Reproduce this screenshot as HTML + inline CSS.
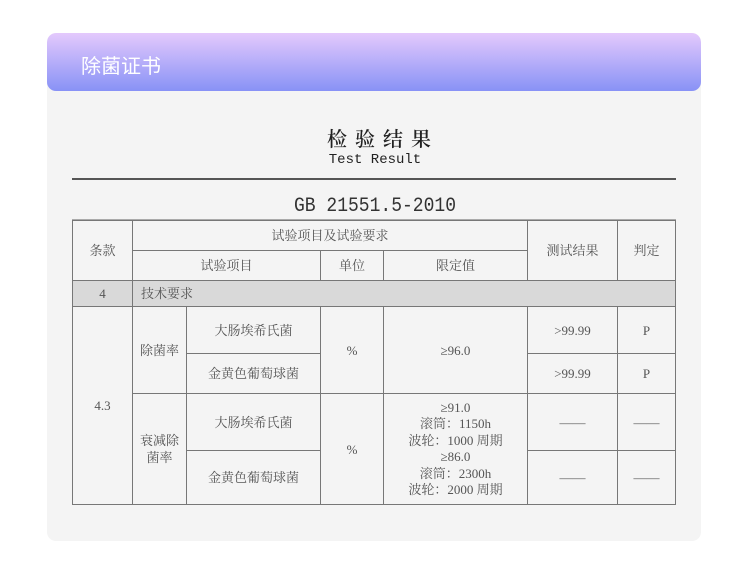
<!DOCTYPE html><html><head><meta charset="utf-8"><style>
body{margin:0;width:750px;height:564px;background:#fff;position:relative;overflow:hidden;font-family:"Liberation Serif","Noto Serif CJK SC",serif;color:#444}
.card{position:absolute;left:47px;top:33px;width:654px;height:508px;background:#f4f4f4;border-radius:9px;overflow:hidden}
.hd{position:absolute;left:0;top:0;width:654px;height:58px;background:linear-gradient(#e4c9fc,#8892f6);border-radius:9px}
.hd span{position:absolute;left:34px;top:17px;color:#fff;font:20px "Noto Sans CJK SC",sans-serif}
.a{position:absolute;text-align:center}
.c{position:absolute;border:1px solid #777;box-sizing:border-box;display:flex;align-items:center;justify-content:center;text-align:center;font-size:13px;line-height:17px;color:#555}
</style></head><body>
<div class="card"><div class="hd"><span>除菌证书</span></div></div>
<div class="a" style="left:0;width:750px;top:123px;font:600 20px 'Noto Serif CJK SC',serif;letter-spacing:8px;color:#222;padding-left:8px">检验结果</div>
<div class="a" style="left:0;width:750px;top:152px;font:14px 'Liberation Mono',monospace;color:#222">Test Result</div>
<div style="position:absolute;left:72px;top:178px;width:604px;height:2px;background:#555"></div>
<div class="a" style="left:0;width:750px;top:195px;font:20px 'Liberation Mono',monospace;color:#333;transform:scaleX(.9)">GB 21551.5-2010</div>
<div style="position:absolute;left:72px;top:219px;width:604px;height:1px;background:#aaa"></div>

<div class="c" style="left:72px;top:220px;width:61px;height:61px">条款</div>
<div class="c" style="left:132px;top:220px;width:396px;height:31px">试验项目及试验要求</div>
<div class="c" style="left:527px;top:220px;width:91px;height:61px">测试结果</div>
<div class="c" style="left:617px;top:220px;width:59px;height:61px">判定</div>
<div class="c" style="left:132px;top:250px;width:189px;height:31px">试验项目</div>
<div class="c" style="left:320px;top:250px;width:64px;height:31px">单位</div>
<div class="c" style="left:383px;top:250px;width:145px;height:31px">限定值</div>
<div class="c" style="left:72px;top:280px;width:61px;height:27px;background:#d9d9d9">4</div>
<div class="c" style="left:132px;top:280px;width:544px;height:27px;background:#d9d9d9;justify-content:flex-start;padding-left:8px">技术要求</div>
<div class="c" style="left:72px;top:306px;width:61px;height:199px">4.3</div>
<div class="c" style="left:132px;top:306px;width:55px;height:88px">除菌率</div>
<div class="c" style="left:186px;top:306px;width:135px;height:48px">大肠埃希氏菌</div>
<div class="c" style="left:186px;top:353px;width:135px;height:41px">金黄色葡萄球菌</div>
<div class="c" style="left:320px;top:306px;width:64px;height:88px">%</div>
<div class="c" style="left:383px;top:306px;width:145px;height:88px">≥96.0</div>
<div class="c" style="left:527px;top:306px;width:91px;height:48px">&gt;99.99</div>
<div class="c" style="left:617px;top:306px;width:59px;height:48px">P</div>
<div class="c" style="left:527px;top:353px;width:91px;height:41px">&gt;99.99</div>
<div class="c" style="left:617px;top:353px;width:59px;height:41px">P</div>
<div class="c" style="left:132px;top:393px;width:55px;height:112px">衰减除<br>菌率</div>
<div class="c" style="left:186px;top:393px;width:135px;height:58px">大肠埃希氏菌</div>
<div class="c" style="left:186px;top:450px;width:135px;height:55px">金黄色葡萄球菌</div>
<div class="c" style="left:320px;top:393px;width:64px;height:112px">%</div>
<div class="c" style="left:383px;top:393px;width:145px;height:112px;line-height:16.5px">≥91.0<br>滚筒：1150h<br>波轮：1000 周期<br>≥86.0<br>滚筒：2300h<br>波轮：2000 周期</div>
<div class="c" style="left:527px;top:393px;width:91px;height:58px">——</div>
<div class="c" style="left:617px;top:393px;width:59px;height:58px">——</div>
<div class="c" style="left:527px;top:450px;width:91px;height:55px">——</div>
<div class="c" style="left:617px;top:450px;width:59px;height:55px">——</div>
</body></html>
